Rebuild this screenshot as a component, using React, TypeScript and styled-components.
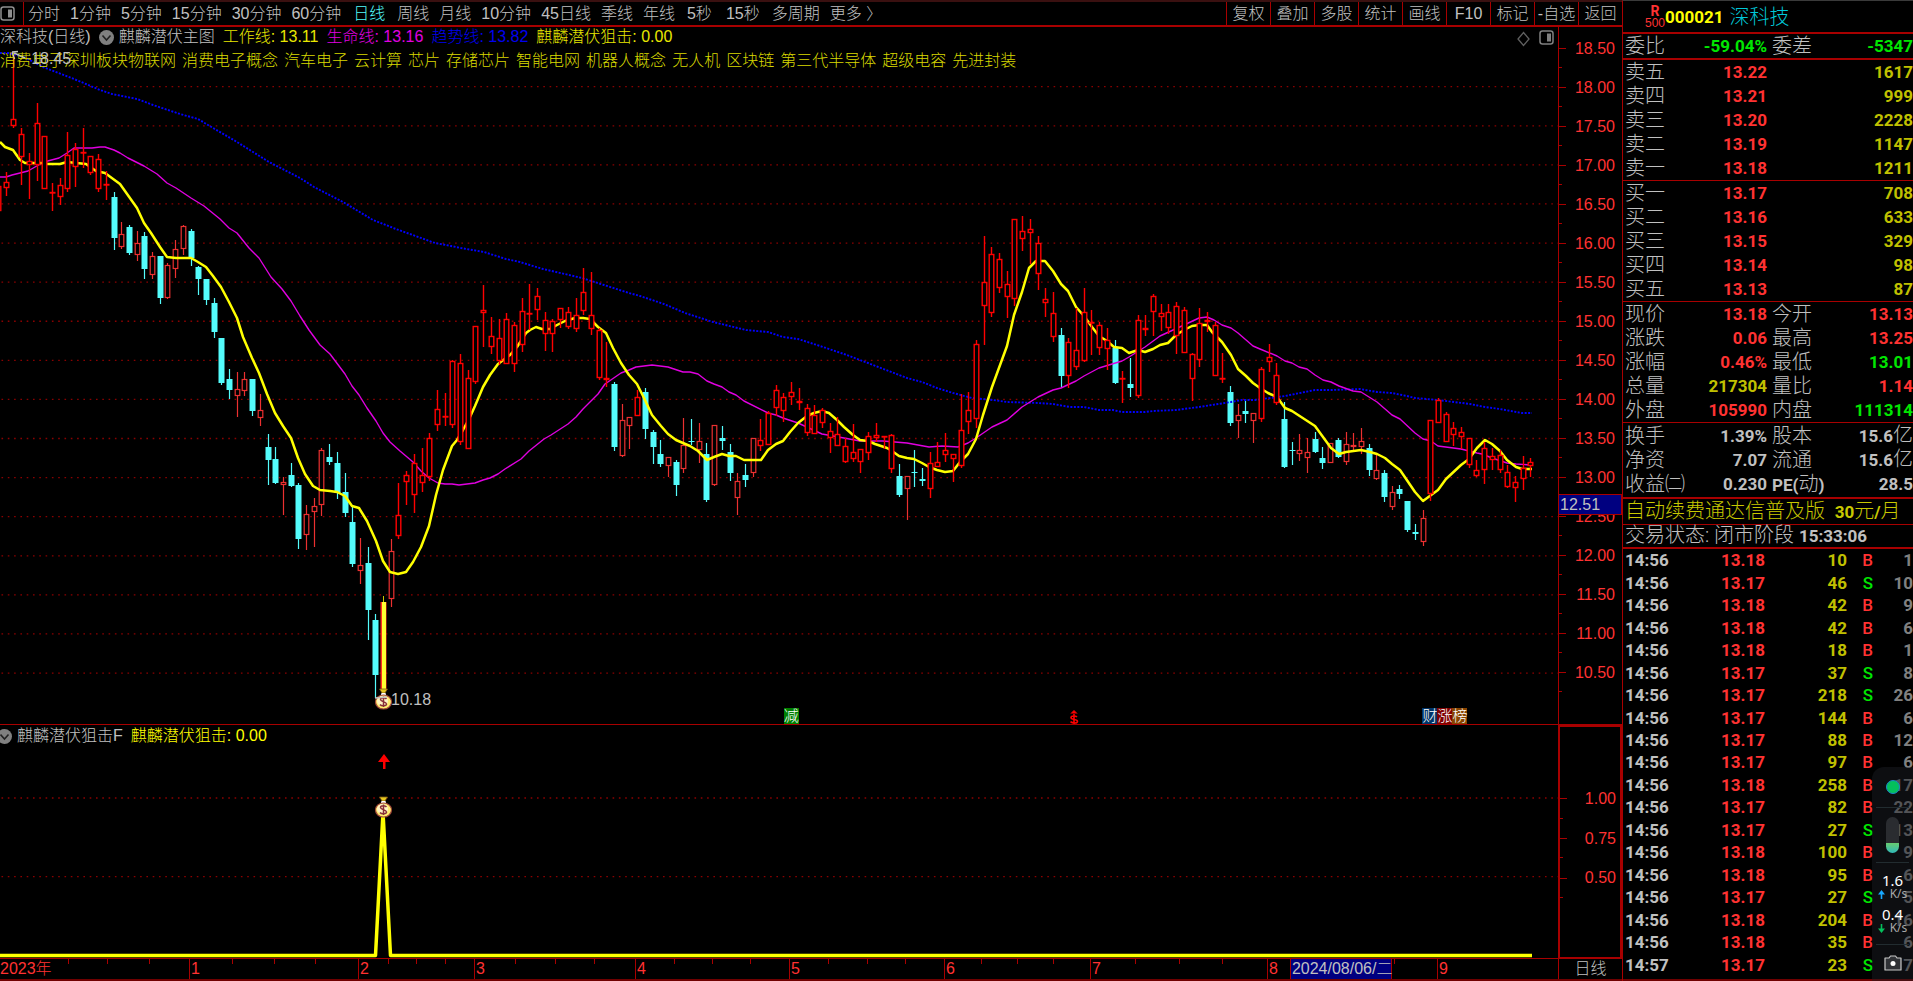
import React from "react";
import styled, { createGlobalStyle } from "styled-components";

const RED = "#a80000";
const UP = "#ff3232";
const DOWN = "#00e600";
const VOLUME = "#c0c000";
const GREY = "#c0c0c0";
const UI_FONT = '"Liberation Sans", "Noto Sans CJK SC", sans-serif';
const QUOTE_FONT = 'Roboto, "Noto Sans CJK SC", sans-serif';

const GlobalStyle = createGlobalStyle`
  * { box-sizing: border-box; }
  body { margin: 0; background: #000; color: ${GREY}; font: 300 16px/20px ${UI_FONT}; }
  button { font: inherit; color: inherit; background: none; border: 0; padding: 0; cursor: pointer; white-space: nowrap; }
  table { border-collapse: collapse; border-spacing: 0; }
  th, td { padding: 0; font-weight: inherit; text-align: left; }
`;

/* ---------- page frame ---------- */

const Page = styled.div`
  display: grid;
  grid-template-columns: minmax(0, 1fr) 291px;
  min-height: 100vh;
  position: relative;
  overflow: hidden;
`;

const Workspace = styled.main`
  display: grid;
  grid-template-rows: 27px minmax(0, 698fr) minmax(0, 234fr) 22px;
  min-width: 0;
`;

const Toolbar = styled.nav`
  display: flex;
  align-items: stretch;
  border-top: 2px solid #3a1010;
  border-bottom: 2px solid ${RED};
`;

const ToolbarIcon = styled.button`
  display: flex;
  align-items: center;
  width: 24px;
  border-right: 1px solid ${RED};
`;

const Periods = styled.div`
  display: flex;
  flex: 1;
  align-items: center;
  gap: 10px;
  padding-left: 4px;
  min-width: 0;
`;

const Period = styled.button<{ $active?: boolean; $wide?: boolean }>`
  color: ${(p) => (p.$active ? "#54fcfc" : GREY)};
  padding: 0 ${(p) => (p.$wide || p.$active ? 2 : 0)}px;
`;

const Tool = styled.button`
  width: 44px;
  border-left: 1px solid ${RED};
  text-align: center;
`;

/* ---------- chart panes ---------- */

const PaneRow = styled.section`
  display: grid;
  grid-template-columns: minmax(0, 1fr) 64px;
  min-height: 0;
`;

const Pane = styled.div`
  position: relative;
  min-width: 0;
  min-height: 0;
  border-bottom: 1px solid ${RED};
  overflow: hidden;
`;

const Drawing = styled.svg`
  position: absolute;
  inset: 0;
  width: 100%;
  height: 100%;
`;

const PaneText = styled.header<{ $lower?: boolean }>`
  position: relative;
  display: flex;
  flex-direction: column;
  gap: 4px;
  padding-top: ${(p) => (p.$lower ? 1 : 0)}px;
`;

const Legend = styled.div`
  display: flex;
  align-items: center;
  gap: 8px;
  white-space: nowrap;
`;

const LegendTitle = styled.div<{ $cut?: boolean }>`
  display: flex;
  align-items: center;
  gap: 5px;
  margin-left: ${(p) => (p.$cut ? -3 : 0)}px;
`;

const StockLabel = styled.span`
  margin-right: 3px;
`;

const Series = styled.span<{ $color: string }>`
  color: ${(p) => p.$color};
`;

const Tags = styled.div`
  display: flex;
  gap: 6px;
  color: #d8d800;
  white-space: nowrap;
`;

const PaneActions = styled.div`
  position: absolute;
  top: 3px;
  right: 4px;
  display: flex;
  gap: 8px;
`;

const PriceNote = styled.span<{ $x: number; $y: number }>`
  position: absolute;
  left: ${(p) => p.$x}%;
  top: ${(p) => p.$y}%;
`;

const Flags = styled.div<{ $x: number }>`
  position: absolute;
  left: ${(p) => p.$x}%;
  bottom: 0;
  display: flex;
`;

const Flag = styled.span<{ $color: string }>`
  width: 15px;
  height: 16px;
  background: ${(p) => p.$color};
  color: #fff;
  font-size: 15px;
  line-height: 16px;
`;

const Scale = styled.div<{ $boxed?: boolean }>`
  display: flex;
  flex-direction: column;
  min-height: 0;
  border-left: ${(p) => (p.$boxed ? 2 : 1)}px solid ${RED};
  border-right: ${(p) => (p.$boxed ? 2 : 0)}px solid ${RED};
  border-top: ${(p) => (p.$boxed ? 2 : 0)}px solid ${RED};
  border-bottom: ${(p) => (p.$boxed ? 2 : 1)}px solid ${RED};
  padding: ${(p) => (p.$boxed ? "52px 4px 59px 0" : "2px 7px 32px 0")};
  position: relative;
`;

const ScaleMark = styled.div`
  flex: 1;
  display: flex;
  align-items: center;
  justify-content: flex-end;
  min-height: 0;
  color: ${UP};
  background:
    linear-gradient(${RED}, ${RED}) 0 50% / 7px 1px no-repeat,
    linear-gradient(${RED}, ${RED}) 0 100% / 3px 1px no-repeat;
`;

const Cursor = styled.output`
  position: absolute;
  left: -1px;
  right: 0;
  top: 67%;
  height: 21px;
  line-height: 19px;
  padding-left: 1px;
  background: #000080;
  border: 1px solid ${RED};
`;

/* ---------- time axis ---------- */

const TimeRow = styled.footer`
  display: grid;
  grid-template-columns: minmax(0, 1fr) 64px;
  border-bottom: 2px solid #700000;
`;

const Months = styled.div`
  display: grid;
  grid-template-columns: 189fr 169fr 116fr 161fr 154fr 155fr 146fr 177fr 170fr 121fr;
`;

const tick = (at: number) =>
  `linear-gradient(${RED}, ${RED}) ${at}% 0 / 1px 5px no-repeat`;

const Month = styled.div<{ $ticks: number[]; $first?: boolean }>`
  display: flex;
  gap: 12px;
  min-width: 0;
  padding-left: ${(p) => (p.$first ? 0 : 1)}px;
  border-left: ${(p) => (p.$first ? 0 : 1)}px solid ${RED};
  color: ${UP};
  white-space: nowrap;
  background: ${(p) => (p.$ticks.length ? p.$ticks.map(tick).join(", ") : "none")};
`;

const DateBox = styled.time`
  width: 102px;
  padding-left: 1px;
  color: ${GREY};
  background: #000080;
  border: solid ${RED};
  border-width: 0 1px;
`;

const PeriodName = styled.div`
  border-left: 1px solid ${RED};
  text-align: center;
`;

/* ---------- quote panel ---------- */

const Quote = styled.aside`
  display: flex;
  flex-direction: column;
  border-left: 1px solid ${RED};
  border-top: 1px solid #3a3a3a;
  font: 300 20px/24px ${QUOTE_FONT};
  min-width: 0;
`;

const StockHead = styled.h1`
  display: flex;
  align-items: center;
  height: 31px;
  margin: 0;
  padding-left: 22px;
  font: inherit;
`;

const Badge = styled.span`
  display: flex;
  flex-direction: column;
  align-items: center;
  width: 20px;
  color: ${UP};
  font: 700 14px/12px ${QUOTE_FONT};
`;

const BadgeNote = styled.small`
  font: 400 12px/12px ${UI_FONT};
`;

const Code = styled.strong`
  color: #ff0;
  font-size: 17px;
  font-weight: 700;
  margin-right: 6px;
`;

const StockName = styled.span`
  color: #00c8d8;
`;

const Block = styled.table<{ $line?: number; $pad?: number }>`
  display: block;
  border-top: ${(p) => p.$line ?? 1}px solid ${RED};
  padding: ${(p) => p.$pad ?? 0}px 0 ${(p) => p.$pad ?? 0}px 2px;

  tbody { display: block; }
`;

const QuoteRow = styled.tr`
  display: grid;
  grid-template-columns: 66px 76px 60px minmax(0, 1fr);
  height: 24px;
  white-space: nowrap;
`;

const Label = styled.th<{ $second?: boolean }>`
  padding-left: ${(p) => (p.$second ? 5 : 0)}px;
`;

const Value = styled.td<{ $color?: string }>`
  color: ${(p) => p.$color ?? GREY};
  font-size: 17px;
  font-weight: 700;
  text-align: right;
`;

const Unit = styled.span`
  font-size: 20px;
  font-weight: 300;
  line-height: 20px;
`;

const Notice = styled.a`
  display: block;
  border-top: 2px solid ${RED};
  border-bottom: 1px solid ${RED};
  padding-left: 2px;
  height: 28px;
  line-height: 24px;
  color: #c8c800;
  text-decoration: none;
  white-space: nowrap;
`;

const Figure = styled.b`
  font-size: 17px;
  font-weight: 700;
`;

const Status = styled.div`
  height: 22px;
  line-height: 21px;
  padding-left: 2px;
  white-space: nowrap;
`;

const TradesBox = styled.div`
  flex: 1;
  border-top: 2px solid ${RED};
  border-bottom: 2px solid #700000;
  padding-bottom: 3px;
  min-height: 0;
`;

const Trades = styled.table`
  width: 100%;
  height: 100%;
  table-layout: fixed;
  font-size: 17px;
  font-weight: 700;
  line-height: 20px;
`;

const TradeCell = styled.td<{ $w: number; $color: string; $left?: boolean; $thin?: boolean }>`
  width: ${(p) => p.$w}px;
  color: ${(p) => p.$color};
  text-align: ${(p) => (p.$left ? "left" : "right")};
  padding-left: ${(p) => (p.$left ? 2 : 0)}px;
  font-weight: ${(p) => (p.$thin ? 500 : 700)};
`;

/* ---------- network widget ---------- */

const Widget = styled.div`
  position: absolute;
  right: 0;
  bottom: 0;
  width: 41px;
  height: 214px;
  display: flex;
  flex-direction: column;
  align-items: center;
  background: rgba(28, 32, 38, 0.45);
  border-top-left-radius: 12px;
  font: 15px/15px "Noto Sans", sans-serif;
  color: #fff;
`;

const WidgetPart = styled.div<{ $h: number; $last?: boolean }>`
  display: flex;
  flex-direction: column;
  align-items: center;
  justify-content: center;
  gap: 7px;
  width: 33px;
  height: ${(p) => p.$h}px;
  border-bottom: ${(p) => (p.$last ? 0 : 1)}px solid #222c30;
`;

const Dot = styled.i`
  width: 14px;
  height: 14px;
  border: 1px solid #1c86c8;
  border-radius: 50%;
  background: #04c05c;
`;

const Pill = styled.i`
  width: 13px;
  height: 36px;
  border-radius: 7px;
  background: linear-gradient(#2a2c30 0 72%, #68cc70 72%, #30b8b8);
`;

const Traffic = styled.div`
  text-align: center;
`;

const Rate = styled.div`
  display: flex;
  align-items: center;
  gap: 5px;
  font-size: 12px;
  line-height: 12px;
  color: #a8a8a8;
`;

/* ---------- chart data ---------- */

// u: strong red, d: soft red, c: cyan; then body top, body bottom, high, low
type Candle = [string, number, number, number, number];

const FIRST_INDEX = -50;
const candleX = (n: number) => 383 + (n + FIRST_INDEX) * 7.7;

const CANDLES: Candle[] = `
u 186 211 186 211|u 182 188 172 196|u 119 126 55 128|u 134 157 128 185|u 161 165 153 199
u 123 165 103 181|u 136 189 136 189|u 192 193 183 211|u 185 197 178 205|u 155 189 132 192
u 149 167 143 187|u 152 153 128 168|u 156 173 156 175|u 159 189 154 192|u 184 184 171 200
c 197 238 192 250|d 234 247 222 249|c 227 253 225 255|d 243 255 231 261|c 236 269 232 279
d 256 275 252 279|c 256 298 256 304|d 265 298 263 299|d 249 269 240 278|d 226 249 225 255
c 231 258 229 266|c 267 279 266 295|c 279 300 279 305|c 303 332 298 338|c 338 383 338 385
c 379 390 369 399|d 389 396 372 417|d 379 391 372 396|c 379 411 379 416|d 410 418 394 426
c 447 460 434 485|c 459 483 447 484|d 482 485 477 515|c 475 486 463 487|c 485 539 483 549
d 514 535 505 550|d 506 512 498 547|d 450 505 448 516|c 457 462 444 465|c 463 493 452 499
c 492 513 473 517|c 522 564 507 567|d 565 571 538 584|c 563 610 547 640|c 620 675 614 698
y 602 691 596 691|d 551 599 539 607|u 515 536 483 539|u 475 482 471 505|u 463 495 454 513
u 475 483 448 492|u 438 477 433 481|u 409 425 390 431|u 416 416 393 426|u 361 425 360 428
u 363 442 354 445|u 378 449 370 449|u 326 382 326 384|u 310 313 285 347|u 336 347 317 354
u 338 361 319 365|u 319 364 313 364|u 325 364 322 372|u 311 345 298 352|u 313 314 284 330
u 296 310 288 320|u 320 334 312 351|u 321 334 319 352|u 308 320 308 328|u 312 327 307 329
u 315 329 298 332|u 292 311 268 315|u 315 329 272 335|u 330 378 328 380|u 378 380 342 387
c 384 447 382 451|d 420 456 404 457|d 417 426 417 449|u 397 416 390 416|c 392 429 388 439
c 432 447 430 464|c 454 464 440 467|d 457 466 457 477|c 462 485 460 496|d 445 469 418 473
c 441 441 419 445|d 441 450 423 463|c 454 500 443 502|d 425 485 425 486|c 438 441 426 450
c 452 473 444 481|d 481 498 473 515|c 475 480 464 487|d 438 473 438 477|u 440 446 419 451
u 413 445 411 445|u 390 408 385 416|u 397 411 393 422|u 392 397 382 405|u 401 403 388 410
u 408 433 404 436|u 415 434 405 434|u 410 423 408 428|u 431 438 423 453|u 434 446 417 446
u 446 462 438 463|u 452 459 424 462|u 449 462 449 473|u 436 453 432 460|u 435 438 423 442
u 436 436 436 449|u 435 469 434 473|c 476 495 464 497|d 476 489 476 520|c 472 472 450 487
c 479 481 468 486|u 463 489 452 498|u 462 467 442 467|u 450 455 433 462|u 454 459 454 482
u 430 466 394 468|u 410 422 392 434|u 344 419 340 428|u 282 306 236 345|u 254 313 247 317
u 259 288 253 293|u 284 297 271 318|u 219 299 219 306|u 231 239 216 251|u 229 233 219 264
u 243 274 236 290|u 299 303 288 317|u 313 337 292 342|c 335 376 328 388|u 342 376 338 388
u 350 367 308 370|u 312 361 288 362|u 322 323 310 355|u 325 348 322 355|u 340 349 328 370
c 348 383 340 384|u 378 379 371 403|c 384 388 358 397|u 320 396 315 398|u 328 330 315 336
u 296 312 294 336|u 313 317 304 331|u 312 328 304 334|u 306 336 302 354|u 310 353 307 353
u 354 379 353 401|u 323 360 308 367|u 320 322 312 332|u 325 376 322 376|u 378 378 353 383
c 392 423 386 426|d 415 421 404 438|c 411 414 399 423|d 413 421 413 443|u 369 419 367 422
u 357 362 344 372|u 375 403 363 405|c 419 467 402 468|c 450 450 442 465|d 450 454 434 461
d 452 458 438 473|c 439 452 432 453|c 458 463 447 469|d 443 463 443 463|c 440 457 438 458
d 444 462 432 465|d 445 447 433 452|d 441 447 428 454|c 448 470 444 476|d 470 479 455 480
c 473 497 470 502|d 492 507 486 510|c 489 494 485 499|c 501 530 501 532|c 532 534 524 540
d 518 542 510 546|u 420 494 420 501|u 400 423 398 423|u 414 442 412 442|u 428 435 422 446
u 432 437 427 449|u 438 465 438 468|u 470 476 460 477|u 448 470 442 484|u 456 460 448 470
u 455 470 450 473|u 472 487 465 488|u 482 488 476 502|u 468 479 456 490|u 462 466 458 477`
  .trim()
  .split(/[\n|]/)
  .map((row) => {
    const [kind, ...n] = row.trim().split(" ");
    return [kind, ...n.map(Number)] as Candle;
  });

const WORK_LINE =
  "0,142 5,147 13,150 20,160 25,163 41,163 48,164 60,164 67,162 86,164 96,171 105,173 120,184 137,208 144,223 151,233 160,247 167,257 176,258 191,258 198,262 206,267 213,276 221,287 229,302 237,318 243,337 252,358 259,373 267,394 275,413 283,426 291,438 298,458 305,474 313,486 320,490 330,491 337,492 345,496 352,506 359,508 367,521 376,541 383,561 390,572 398,574 406,572 413,562 421,547 429,526 436,495 443,470 452,446 457,440 463,430 470,417 475,406 483,387 490,375 498,364 510,355 517,347 526,333 530,330 536,327 542,329 550,329 557,325 565,321 575,318 583,318 590,319 598,327 606,333 613,348 621,363 629,375 637,384 644,398 652,415 661,426 668,434 676,440 683,443 690,446 698,451 707,460 714,457 722,454 729,456 736,456 744,460 761,460 768,450 776,444 783,441 790,432 798,423 807,416 814,413 822,411 829,413 837,420 844,427 853,435 860,440 868,441 875,444 887,448 892,451 899,456 907,458 914,459 922,463 929,467 937,470 945,472 953,471 960,462 968,454 976,439 983,415 992,387 1007,346 1014,315 1022,292 1029,268 1036,261 1045,261 1053,271 1061,284 1068,291 1076,307 1084,316 1092,327 1099,336 1107,341 1114,347 1122,348 1129,353 1138,350 1145,352 1153,349 1160,345 1168,343 1176,335 1184,330 1192,326 1199,325 1207,325 1212,332 1222,342 1231,355 1238,369 1246,376 1253,383 1260,388 1268,393 1277,397 1285,408 1292,411 1315,426 1323,437 1331,448 1339,454 1346,452 1361,450 1370,452 1377,454 1385,458 1392,464 1400,470 1415,492 1423,501 1438,490 1446,479 1461,465 1469,459 1477,448 1485,440 1492,444 1500,451 1507,460 1516,467 1522,469 1532,469";

const LIFE_LINE =
  "0,177 6,177 12,175 20,173 28,171 35,167 44,162 59,158 67,153 74,148 92,148 100,147 105,147 114,150 120,153 128,158 144,166 157,174 167,183 176,188 191,198 204,206 220,219 229,228 237,233 249,248 259,258 271,277 282,289 291,301 300,316 309,330 320,345 330,354 345,374 352,386 359,395 367,408 376,421 383,433 390,442 400,451 413,462 421,471 429,478 438,483 445,484 452,484 459,485 475,483 483,480 490,478 498,474 505,469 521,459 529,451 544,439 551,435 568,424 576,417 583,409 590,402 598,394 605,384 621,373 629,370 636,367 652,365 668,367 683,372 690,372 698,374 707,381 714,384 722,387 729,392 736,395 744,401 768,413 776,415 783,418 798,423 822,434 844,438 860,441 883,441 907,443 929,447 942,446 958,447 968,443 976,438 992,427 1007,420 1022,407 1038,397 1053,390 1061,388 1076,381 1084,376 1099,368 1122,361 1129,357 1145,347 1160,336 1184,325 1199,318 1207,317 1214,320 1222,325 1231,328 1238,333 1253,346 1260,349 1277,356 1285,361 1292,363 1299,367 1307,369 1315,375 1323,380 1331,382 1339,386 1353,391 1361,392 1377,402 1392,415 1400,419 1415,433 1423,439 1431,441 1438,446 1461,449 1469,451 1477,453 1482,454 1492,458 1507,463 1516,464 1531,465";

const TREND_LINE =
  "0,53 8,53 24,57 43,67 74,79 86,84 100,90 112,94 137,99 153,105 180,114 198,119 208,125 237,142 269,162 300,178 314,187 343,202 373,220 396,229 435,243 451,246 461,248 484,252 506,259 520,262 543,269 582,278 604,285 629,293 640,296 664,304 685,313 713,322 746,330 768,332 783,337 798,339 817,345 844,354 868,363 907,378 922,382 937,388 953,393 972,398 993,400 1007,402 1038,403 1053,404 1070,407 1084,407 1099,410 1113,410 1122,412 1145,412 1153,411 1176,410 1199,407 1231,402 1242,400 1255,400 1285,396 1315,390 1332,390 1360,389 1377,392 1392,393 1407,396 1415,398 1438,400 1470,404 1485,407 1500,409 1522,413 1532,413";

const PRICES = Array.from({ length: 17 }, (_, n) => (18.5 - n * 0.5).toFixed(2));
const GRID = Array.from({ length: 16 }, (_, n) => 86.7 + n * 39.09);

const PERIODS = [
  "分时", "1分钟", "5分钟", "15分钟", "30分钟", "60分钟", "日线", "周线", "月线",
  "10分钟", "45日线", "季线", "年线", "5秒", "15秒", "多周期", "更多 〉",
];
const TOOLS = ["复权", "叠加", "多股", "统计", "画线", "F10", "标记", "-自选", "返回"];
const TAGS = [
  "消费电子深圳板块物联网", "消费电子概念", "汽车电子", "云计算", "芯片", "存储芯片",
  "智能电网", "机器人概念", "无人机", "区块链", "第三代半导体", "超级电容", "先进封装",
];

type Pair = [string, string, string?, string?, string?, string?];

const ORDER_SELL: Pair[] = [
  ["卖五", "13.22", UP, "", "1617", VOLUME],
  ["卖四", "13.21", UP, "", "999", VOLUME],
  ["卖三", "13.20", UP, "", "2228", VOLUME],
  ["卖二", "13.19", UP, "", "1147", VOLUME],
  ["卖一", "13.18", UP, "", "1211", VOLUME],
];
const ORDER_BUY: Pair[] = [
  ["买一", "13.17", UP, "", "708", VOLUME],
  ["买二", "13.16", UP, "", "633", VOLUME],
  ["买三", "13.15", UP, "", "329", VOLUME],
  ["买四", "13.14", UP, "", "98", VOLUME],
  ["买五", "13.13", UP, "", "87", VOLUME],
];
const SUMMARY: Pair[] = [
  ["现价", "13.18", UP, "今开", "13.13", UP],
  ["涨跌", "0.06", UP, "最高", "13.25", UP],
  ["涨幅", "0.46%", UP, "最低", "13.01", DOWN],
  ["总量", "217304", VOLUME, "量比", "1.14", UP],
  ["外盘", "105990", UP, "内盘", "111314", DOWN],
];
const FUNDAMENTALS: Pair[] = [
  ["换手", "1.39%", GREY, "股本", "15.6亿", GREY],
  ["净资", "7.07", GREY, "流通", "15.6亿", GREY],
  ["收益㈡", "0.230", GREY, "PE(动)", "28.5", GREY],
];

const TRADES: [string, string, number, string, number][] = [
  ["14:56", "13.18", 10, "B", 1],
  ["14:56", "13.17", 46, "S", 10],
  ["14:56", "13.18", 42, "B", 9],
  ["14:56", "13.18", 42, "B", 6],
  ["14:56", "13.18", 18, "B", 1],
  ["14:56", "13.17", 37, "S", 8],
  ["14:56", "13.17", 218, "S", 26],
  ["14:56", "13.17", 144, "B", 6],
  ["14:56", "13.17", 88, "B", 12],
  ["14:56", "13.17", 97, "B", 6],
  ["14:56", "13.18", 258, "B", 17],
  ["14:56", "13.17", 82, "B", 22],
  ["14:56", "13.17", 27, "S", 13],
  ["14:56", "13.18", 100, "B", 9],
  ["14:56", "13.18", 95, "B", 6],
  ["14:56", "13.17", 27, "S", 5],
  ["14:56", "13.18", 204, "B", 16],
  ["14:56", "13.18", 35, "B", 6],
  ["14:57", "13.17", 23, "S", 7],
];

const MONTHS: [string, number[]][] = [
  ["2023年", [36, 57, 79]],
  ["1", [25, 50, 75]],
  ["2", [25, 50, 75]],
  ["3", [25, 50, 75]],
  ["4", [25, 50, 75]],
  ["5", [25, 50, 75]],
  ["6", [25, 50, 75]],
  ["7", [25, 50, 75]],
  ["8", [75]],
  ["9", []],
];

/* ---------- drawings ---------- */

const ChevronBadge = () => (
  <svg width="15" height="15" viewBox="0 0 15 15" aria-hidden="true">
    <circle cx="7.5" cy="7.5" r="7.5" fill="#808080" />
    <path d="M3.5 5.5 7.5 10l4-4.5" fill="none" stroke="#222" strokeWidth="1.6" />
  </svg>
);

const PanelIcon = ({ color = "#909090" }: { color?: string }) => (
  <svg width="15" height="15" viewBox="0 0 15 15" aria-hidden="true">
    <rect x="1" y="1" width="13" height="13" rx="2.5" fill="none" stroke={color} strokeWidth="1.5" />
    <rect x="8" y="3.5" width="4" height="8" fill={color} />
  </svg>
);

const MoneyBag = ({ x, y }: { x: number; y: number }) => (
  <g transform={`translate(${x} ${y})`}>
    <path d="M-4-12h8l-2.5 4h-3z" fill="#e8c820" stroke="#7a5a10" strokeWidth=".8" />
    <path d="M-2-8h4l1 3h-6z" fill="#fff" />
    <ellipse cx="0" cy="1" rx="8" ry="7" fill="#ffec70" stroke="#a04838" strokeWidth="1.2" />
    <ellipse cx="-1" cy="0" rx="5.5" ry="5" fill="#fff3c4" />
    <path d="M3-2C1.500-4-3-3.500-3-1.400S3 .900 3 3-2 5.500-3.500 3.500M0-4.500v10.500" fill="none" stroke="#8a3038" strokeWidth="1.5" />
  </g>
);

function CandleShape({ candle, n }: { candle: Candle; n: number }) {
  const [kind, top, bottom, high, low] = candle;
  const x = Math.round(candleX(n)) + 0.5;
  if (kind === "y") {
    return (
      <g>
        <path d={`M${x} ${high}V${top}`} stroke="#c8c800" />
        <rect x={x - 3} y={top} width="6" height={bottom - top} fill="#ff3020" />
        <rect x={x - 1.5} y={top} width="4" height={bottom - top} fill="#ffff30" />
      </g>
    );
  }
  if (kind === "c") {
    return (
      <g>
        <path d={`M${x} ${high}V${low}`} stroke="#54fcfc" strokeWidth="1.2" />
        <rect x={x - 3} y={top} width="6" height={Math.max(bottom - top, 1)} fill="#54fcfc" />
      </g>
    );
  }
  const color = kind === "u" ? "#f00" : "#ec3030";
  return (
    <g stroke={color} strokeWidth={kind === "u" ? 1.4 : 1.2} fill="#000">
      <path d={`M${x} ${high}V${top}M${x} ${bottom}V${low}`} />
      <rect x={x - 2.3} y={top + 0.5} width="4.6" height={Math.max(bottom - top - 1, 0.5)} />
    </g>
  );
}

const candlesOf = (kinds: string) =>
  CANDLES.map((candle, n) =>
    kinds.includes(candle[0]) ? <CandleShape key={n} candle={candle} n={n} /> : null,
  );

function MainDrawing() {
  return (
    <Drawing viewBox="0 27 1558 697" preserveAspectRatio="none" aria-label="深科技 日线">
      <g stroke="#8c0000" strokeWidth="1.3" strokeDasharray="1.6 4.7">
        {GRID.map((y) => (
          <path key={y} d={`M1.500 ${y}H1558`} />
        ))}
      </g>
      {candlesOf("cd")}
      <g fill="none" strokeLinejoin="round">
        <polyline points={TREND_LINE} stroke="#0000ff" strokeWidth="1.9" strokeDasharray="2 1.5" />
        <polyline points={LIFE_LINE} stroke="#e000e0" strokeWidth="1.4" />
        <polyline points={WORK_LINE} stroke="#ff0" strokeWidth="2.5" />
      </g>
      {candlesOf("uy")}
      <path d="M12 52l13 6M12 52l2.500 7M12 52l6-.5" fill="none" stroke={GREY} strokeWidth="1.5" />
      <MoneyBag x={383.5} y={701} />
      <path d="M375 698l12-1" stroke={GREY} strokeWidth="1.5" />
      <g fill="none" stroke="#f00" strokeWidth="2">
        <path d="M1071 713.500l3-3 3 3" fill="#f00" strokeWidth="1" />
        <path d="M1077 717c-1.500-1.500-6-1.500-6 .8s6.500 1 6.500 3.400-5 2.300-7 .5M1074 714v10" strokeWidth="1.600" />
      </g>
    </Drawing>
  );
}

function SignalDrawing() {
  return (
    <Drawing viewBox="0 725 1558 233" preserveAspectRatio="none" aria-label="麒麟潜伏狙击">
      <g stroke="#8c0000" strokeWidth="1.3" strokeDasharray="1.6 4.7">
        <path d="M1.500 798H1558M1.500 876.600H1558" />
      </g>
      <polyline
        points="0,955.500 375.500,955.500 383,812 390.500,955.500 1532,955.500"
        fill="none"
        stroke="#ff0"
        strokeWidth="3.5"
        strokeLinejoin="round"
      />
      <MoneyBag x={383.5} y={809} />
      <path d="M384 754l6 8h-4.500v7h-2.500v-7h-5z" fill="#f00" />
    </Drawing>
  );
}

const withUnit = (text: string) =>
  text.endsWith("亿") ? (
    <>
      {text.slice(0, -1)}
      <Unit>亿</Unit>
    </>
  ) : (
    text
  );

function QuoteBlock({ rows, line, pad }: { rows: Pair[]; line?: number; pad?: number }) {
  return (
    <Block $line={line} $pad={pad}>
      <tbody>
        {rows.map(([label, value, color, label2, value2, color2]) => (
          <QuoteRow key={label}>
            <Label scope="row">{label}</Label>
            <Value $color={color}>{value}</Value>
            <Label as={label2 ? "th" : "td"} $second>
              {label2 === "PE(动)" ? (
                <>
                  <Figure>PE(</Figure>动<Figure>)</Figure>
                </>
              ) : (
                label2
              )}
            </Label>
            <Value $color={color2}>{withUnit(value2 ?? "")}</Value>
          </QuoteRow>
        ))}
      </tbody>
    </Block>
  );
}

export default function App() {
  return (
    <Page>
      <GlobalStyle />
      <Workspace>
        <Toolbar>
          <ToolbarIcon aria-label="侧栏">
            <PanelIcon />
          </ToolbarIcon>
          <Periods>
            {PERIODS.map((name) => (
              <Period key={name} $active={name === "日线"} $wide={name.endsWith("秒")}>
                {name}
              </Period>
            ))}
          </Periods>
          {TOOLS.map((name) => (
            <Tool key={name}>{name}</Tool>
          ))}
        </Toolbar>

        <PaneRow>
          <Pane>
            <MainDrawing />
            <PaneText>
              <Legend>
                <LegendTitle>
                  <StockLabel>深科技(日线)</StockLabel>
                  <ChevronBadge />
                  麒麟潜伏主图
                </LegendTitle>
                <Series $color="#e8e800">工作线: 13.11</Series>
                <Series $color="#e000e0">生命线: 13.16</Series>
                <Series $color="#0000f0">趋势线: 13.82</Series>
                <Series $color="#e8e800">麒麟潜伏狙击: 0.00</Series>
              </Legend>
              <Tags>
                {TAGS.map((name) => (
                  <span key={name}>{name}</span>
                ))}
              </Tags>
            </PaneText>
            <PaneActions>
              <svg width="15" height="17" viewBox="0 0 15 17" aria-hidden="true">
                <path d="M7.500 2.500 13 9l-5.500 6.500L2 9z" fill="none" stroke="#606060" strokeWidth="1.300" />
              </svg>
              <PanelIcon color="#808080" />
            </PaneActions>
            <PriceNote $x={2} $y={3.2}>18.45</PriceNote>
            <PriceNote $x={25.1} $y={95.1}>10.18</PriceNote>
            <Flags $x={50.3}>
              <Flag $color="#008000">减</Flag>
            </Flags>
            <Flags $x={91.3}>
              <Flag $color="#003468">财</Flag>
              <Flag $color="#800000">涨</Flag>
              <Flag $color="#884400">榜</Flag>
            </Flags>
          </Pane>
          <Scale>
            {PRICES.map((price) => (
              <ScaleMark key={price}>{price}</ScaleMark>
            ))}
            <Cursor>12.51</Cursor>
          </Scale>
        </PaneRow>

        <PaneRow>
          <Pane>
            <SignalDrawing />
            <PaneText $lower>
              <Legend>
                <LegendTitle $cut>
                  <ChevronBadge />
                  麒麟潜伏狙击F
                </LegendTitle>
                <Series $color="#ff0">麒麟潜伏狙击: 0.00</Series>
              </Legend>
            </PaneText>
          </Pane>
          <Scale $boxed>
            {["1.00", "0.75", "0.50"].map((level) => (
              <ScaleMark key={level}>{level}</ScaleMark>
            ))}
          </Scale>
        </PaneRow>

        <TimeRow>
          <Months>
            {MONTHS.map(([name, ticks], n) => (
              <Month key={name} $ticks={ticks} $first={n === 0}>
                {name}
                {name === "8" && <DateBox dateTime="2024-08-06">2024/08/06/二</DateBox>}
              </Month>
            ))}
          </Months>
          <PeriodName>日线</PeriodName>
        </TimeRow>
      </Workspace>

      <Quote>
        <StockHead>
          <Badge>
            R<BadgeNote>500</BadgeNote>
          </Badge>
          <Code>000021</Code>
          <StockName>深科技</StockName>
        </StockHead>
        <QuoteBlock line={2} rows={[["委比", "-59.04%", DOWN, "委差", "-5347", DOWN]]} />
        <QuoteBlock line={2} rows={ORDER_SELL} />
        <QuoteBlock rows={ORDER_BUY} />
        <QuoteBlock rows={SUMMARY} />
        <QuoteBlock rows={FUNDAMENTALS} pad={1} />
        <Notice href="#renew">
          自动续费通达信普及版&nbsp; <Figure>30</Figure>元<Figure>/</Figure>月
        </Notice>
        <Status>
          交易状态: 闭市阶段 <Figure>15:33:06</Figure>
        </Status>
        <TradesBox>
          <Trades>
            <tbody>
              {TRADES.map(([time, price, volume, side, count], n) => (
                <tr key={n}>
                  <TradeCell $w={60} $color={GREY} $left>{time}</TradeCell>
                  <TradeCell $w={82} $color={UP}>{price}</TradeCell>
                  <TradeCell $w={82} $color={VOLUME}>{volume}</TradeCell>
                  <TradeCell $w={26} $color={side === "B" ? UP : DOWN} $thin>{side}</TradeCell>
                  <TradeCell $w={40} $color="#808080">{count}</TradeCell>
                </tr>
              ))}
            </tbody>
          </Trades>
        </TradesBox>
      </Quote>

      <Widget>
        <WidgetPart $h={41}>
          <Dot />
        </WidgetPart>
        <WidgetPart $h={55}>
          <Pill />
        </WidgetPart>
        <WidgetPart $h={82}>
          <Traffic>
            1.6
            <Rate>
              <svg width="7" height="9" viewBox="0 0 7 9" aria-hidden="true">
                <path d="M3.500 0 7 4.500H4.300V9H2.700V4.500H0z" fill="#18a8ff" />
              </svg>
              K/s
            </Rate>
          </Traffic>
          <Traffic>
            0.4
            <Rate>
              <svg width="7" height="9" viewBox="0 0 7 9" aria-hidden="true">
                <path d="M3.500 9 0 4.500h2.700V0h1.600v4.500H7z" fill="#04c05c" />
              </svg>
              K/s
            </Rate>
          </Traffic>
        </WidgetPart>
        <WidgetPart $h={36} $last>
          <svg width="18" height="16" viewBox="0 0 18 16" aria-hidden="true">
            <path d="M1 3h4l1.500-2h5L13 3h4v12H1z" fill="#303236" stroke="#c8c8c8" strokeWidth="1.200" strokeLinejoin="round" />
            <circle cx="9" cy="8.500" r="2.500" fill="#fff" />
          </svg>
        </WidgetPart>
      </Widget>
    </Page>
  );
}
